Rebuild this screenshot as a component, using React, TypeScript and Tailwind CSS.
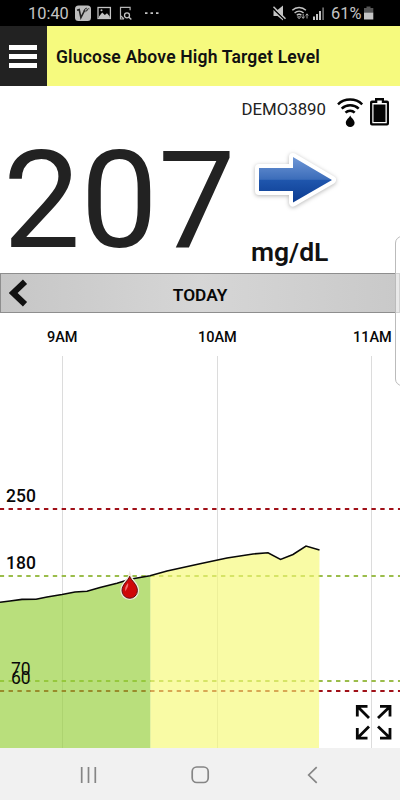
import { ReactNode } from "react";

const HOURS = [62.5, 217.5, 371.5];

const TRACE: [number, number][] = [
  [0, 602.3], [10, 601], [22, 599.4], [36, 599.2], [47, 597], [62, 594.5],
  [75, 592], [87, 591.2], [100, 587.6], [117, 583.2], [130, 579.3], [150, 575.8],
  [167, 571], [200, 563.8], [227, 558], [253, 554], [268, 552.8], [280.5, 559.4],
  [293, 554.5], [306, 546], [319.5, 550],
];

const LINES = [
  { y: 509, color: "#a01018" },
  { y: 576, color: "#9bbd4b" },
  { y: 681, color: "#9bbd4b" },
  { y: 691, color: "#a01018" },
];

const toPath = (pts: [number, number][]) => pts.map((p) => p.join(",")).join(" ");

function StatusBar() {
  return (
    <div className="flex h-[26px] items-center bg-black pl-7 text-[#c4c4c4]">
      <span className="w-[47px] pt-[2px] text-[16.4px] leading-none">10:40</span>
      <svg className="h-[26px] w-[90px]" viewBox="75 0 90 26" fill="none">
        <rect x="75" y="5.5" width="16" height="15.5" rx="3.5" fill="#bdbdbd" />
        <path d="M77 10.2l2.2-.7 1.7 8.2 4.2-8.2" stroke="#222" strokeWidth="1.6" />
        <path d="M84 11c.5-3 3-3.5 3.2-1.8S85 12 86 11.4s2-3.6 3.3-2.5" stroke="#333" strokeWidth="1" />
        <rect x="98" y="7.5" width="12.4" height="11" stroke="#c4c4c4" strokeWidth="1.3" />
        <path d="M99 16.5l3.2-4 2.6 2.5 2.2-1.8 2.8 3.2v1.6H99z" fill="#c4c4c4" />
        <circle cx="101.5" cy="10.2" r="1" fill="#c4c4c4" />
        <path d="M124 19h-3.5V7.3h9.6v3M124 19l-3-3" stroke="#b5b5b5" strokeWidth="1.2" />
        <circle cx="127" cy="15.3" r="2.5" stroke="#c4c4c4" strokeWidth="1.3" />
        <path d="M129 17.2l2.3 2.3" stroke="#c4c4c4" strokeWidth="1.4" />
        <path d="M145 12.2h2.5v1.8H145zM150.5 12.2h2.5v1.8h-2.5zM156 12.2h2.5v1.8H156z" fill="#c4c4c4" />
      </svg>
      <svg className="ml-[105px] h-[26px] w-[56px]" viewBox="270 0 56 26" fill="none">
        <path d="M273.5 10h4l5.500-4.500v15l-5.500-4.500h-4z" fill="#c4c4c4" />
        <path d="M272.500 8l12.500 12" stroke="#000" strokeWidth="1.600" />
        <path d="M273.500 6.800l12 12" stroke="#c4c4c4" strokeWidth="1.500" />
        <path d="M292.300 10.300c3.800-3.700 9.800-3.700 13.600 0M294.600 13c2.600-2.400 6.400-2.400 9 0M296.800 15.300c1.300-1.200 3.300-1.200 4.600 0" stroke="#c4c4c4" strokeWidth="1.400" />
        <path d="M299.100 18.800l-1.600-2h3.200zM303.200 14v4M301.700 16.500l1.500 2 1.500-2M307 18.500v-4.500M305.700 15.500l1.300-1.700 1.300 1.700" stroke="#b5b5b5" strokeWidth=".9" />
        <path d="M313 16.500h2V20h-2zM316 14h2v6h-2zM319 11h2v9h-2z" fill="#c4c4c4" />
        <path d="M322.300 7.500h1.600V20h-1.600z" fill="#777" />
      </svg>
      <span className="ml-[5px] w-[31px] pt-[2px] text-[16.400px] leading-none">61%</span>
      <svg className="h-[26px] w-[12px]" viewBox="362 0 12 26">
        <path d="M366.500 6.500h4v1.500h2.800v4.500h-9.300V8h2.500z" fill="#555" />
        <path d="M364 12.500h9.300v7H364z" fill="#c4c4c4" />
      </svg>
    </div>
  );
}

function AlertHeader() {
  return (
    <div className="flex h-[60px] bg-[#f6fa7e]">
      <button className="flex w-[47px] flex-col items-center justify-center gap-[4px] bg-[#222] pr-[1px]">
        <span className="h-[5px] w-[28px] bg-white" />
        <span className="h-[5px] w-[28px] bg-white" />
        <span className="h-[5px] w-[28px] bg-white" />
      </button>
      <h1 className="flex items-center pt-[3px] pl-[9px] text-[17.500px] font-semibold tracking-[0.180px] whitespace-nowrap text-[#111]">
        Glucose Above High Target Level
      </h1>
    </div>
  );
}

function Reading() {
  return (
    <div className="flex h-[187px] flex-col">
      <div className="flex h-[46px] items-center justify-end pr-[10px]">
        <span className="mt-[2px] mr-[10px] text-[16.800px] text-[#222]">DEMO3890</span>
        <svg className="mt-[5px] mr-[6px] h-[32px] w-[28px]" viewBox="335 95 28 32" fill="none">
          <path d="M337 103.300c6.600-6.300 17.600-6.300 24.200 0M340.700 107.600c4.700-4.500 12.300-4.500 17 0M344.500 111.700c2.600-2.600 6.600-2.600 9.200 0" stroke="#050505" strokeWidth="2.500" />
          <path d="M349.200 114.500c.8 2.300 4.400 4.300 4.400 7.200a4.400 4.400 0 0 1-8.800 0c0-2.900 3.600-4.900 4.400-7.200z" fill="#050505" />
        </svg>
        <svg className="mt-[5px] h-[32px] w-[20px]" viewBox="370 96 20 32">
          <path d="M375 98h9v2.500h3q2 0 2 2v21q0 2-2 2h-15q-2 0-2-2v-21q0-2 2-2h3z" fill="#050505" />
          <path d="M372.300 103h5V100.500h4.500V103h5v20.200h-14.500z" fill="#fff" />
          <path d="M373.500 104.500h12v17.500h-12z" fill="#050505" />
        </svg>
      </div>
      <div className="flex">
        <div className="w-[251px] pt-px pl-[3px]">
          <span className="inline-block origin-left scale-x-[1.025] text-[134.500px] leading-[136px] text-[#222]">207</span>
        </div>
        <div className="flex flex-col">
          <svg className="mt-[14px] h-[70px] w-[90px]" viewBox="251 146 90 70">
            <defs>
              <linearGradient id="arrow" x1="0" y1="0" x2="0" y2="1">
                <stop offset="0" stopColor="#6f97d6" />
                <stop offset=".49" stopColor="#3c6dba" />
                <stop offset=".51" stopColor="#1f56ad" />
                <stop offset="1" stopColor="#0b3b91" />
              </linearGradient>
            </defs>
            <path
              d="M259 168h34v-11l39 23-39 22.500V191h-34z"
              fill="#fff"
              stroke="#fff"
              strokeWidth="8"
              strokeLinejoin="round"
              className="drop-shadow-[0_1px_2px_rgba(0,0,0,0.28)]"
            />
            <path d="M259 168h34v-11l39 23-39 22.500V191h-34z" fill="url(#arrow)" />
          </svg>
          <span className="mt-[20px] text-[26.500px] leading-[32px] font-semibold text-[#111]">mg/dL</span>
        </div>
      </div>
    </div>
  );
}

function DayBar() {
  return (
    <div className="relative flex h-[40px] items-center justify-center border border-[#8e8e8e] bg-linear-to-r from-[#c6c6c6] via-[#d6d6d6] to-[#c9c9c9]">
      <svg className="absolute top-[5px] left-[8px] h-[28px] w-[20px]" viewBox="9 279 20 28" fill="none">
        <path d="M25 281.800L13.200 293 25 304.200" stroke="#111" strokeWidth="6" />
      </svg>
      <span className="mt-[5px] text-[17.300px] font-semibold text-[#080808]">TODAY</span>
    </div>
  );
}

function Label({ className, children }: { className: string; children: ReactNode }) {
  return <span className={`absolute leading-none text-[#080808] ${className}`}>{children}</span>;
}

function Chart() {
  const low = TRACE.slice(0, 12);
  const high = TRACE.slice(11);
  return (
    <div className="relative h-[435px]">
      <svg className="block h-full w-full" viewBox="0 313 400 435" fill="none">
        {HOURS.map((x) => (
          <path key={x} d={`M${x} 356V748`} stroke="#dcdcdc" />
        ))}
        {LINES.map((l) => (
          <path key={l.y} d={`M-.3 ${l.y}H400`} stroke={l.color} strokeWidth="2" strokeDasharray="4.400 4.450" />
        ))}
        <polygon points={`0,748 ${toPath(low)} 150.500,575.800 150.500,748`} fill="#93ce35" fillOpacity=".65" />
        <polygon points={`150.500,748 150.500,575.800 ${toPath(high.slice(1))} 319,748`} fill="#f6f975" fillOpacity=".65" />
        <polyline points={toPath(TRACE)} stroke="#080808" strokeWidth="1.600" />
        {/* calibration drop */}
        <path d="M129.700 576.300c1.300 4.200 7.700 8 7.700 14.300a7.700 7.700 0 0 1-15.400 0c0-6.300 6.400-10.100 7.700-14.300z" fill="#d00a0a" stroke="#eee9dc" strokeWidth="3.500" />
        <path d="M129.700 576.300c1.300 4.200 7.700 8 7.700 14.300a7.700 7.700 0 0 1-15.400 0c0-6.300 6.400-10.100 7.700-14.300z" fill="#cf0808" stroke="#601010" />
        <path d="M128 583c-2.500 3-3.500 5.500-2.500 8.500 1-3 3.500-5 2.500-8.500z" fill="#f07070" />
        {/* expand */}
        <g stroke="#080808" strokeWidth="2.800">
          <path d="M357.300 716.500V706.300H367.500M358 707l11 11" />
          <path d="M380 706.300h10V716.500M389.500 707l-11.500 11" />
          <path d="M357.300 728v10.200H367.500M358 737.500l11-11" />
          <path d="M380 738.200h10V728M389.500 737.500l-11.500-11" />
        </g>
      </svg>
      <Label className="top-[18px] left-[47px] text-[14.500px] font-medium">9AM</Label>
      <Label className="top-[18px] left-[198px] text-[14.500px] font-medium">10AM</Label>
      <Label className="top-[18px] left-[353px] text-[14.500px] font-medium">11AM</Label>
      <Label className="top-[175px] left-[6px] text-[17.500px] font-medium">250</Label>
      <Label className="top-[242px] left-[6px] text-[17.500px] font-medium">180</Label>
      <Label className="top-[348px] left-[11px] text-[17.500px]">70</Label>
      <Label className="top-[357px] left-[11px] text-[17.500px]">60</Label>
    </div>
  );
}

function NavBar() {
  return (
    <div className="flex h-[52px] bg-[#f1f1f1]">
      <svg className="h-full w-full" viewBox="0 748 400 52" fill="none" stroke="#858585" strokeWidth="1.700">
        <path d="M81.700 767v16M88.500 767v16M95.300 767v16" />
        <rect x="192.200" y="767" width="16" height="15.500" rx="4.500" />
        <path d="M316.700 767.200L308.700 775l8 7.800" />
      </svg>
    </div>
  );
}

export default function App() {
  return (
    <div className="relative h-[800px] w-[400px] overflow-hidden bg-white font-[Roboto,sans-serif]">
      <StatusBar />
      <AlertHeader />
      <Reading />
      <DayBar />
      <Chart />
      <NavBar />
      {/* edge panel handle */}
      <div className="absolute top-[236px] -right-[8px] h-[150px] w-[13px] rounded-l-[7px] border border-[#bbb] bg-white/60" />
    </div>
  );
}
